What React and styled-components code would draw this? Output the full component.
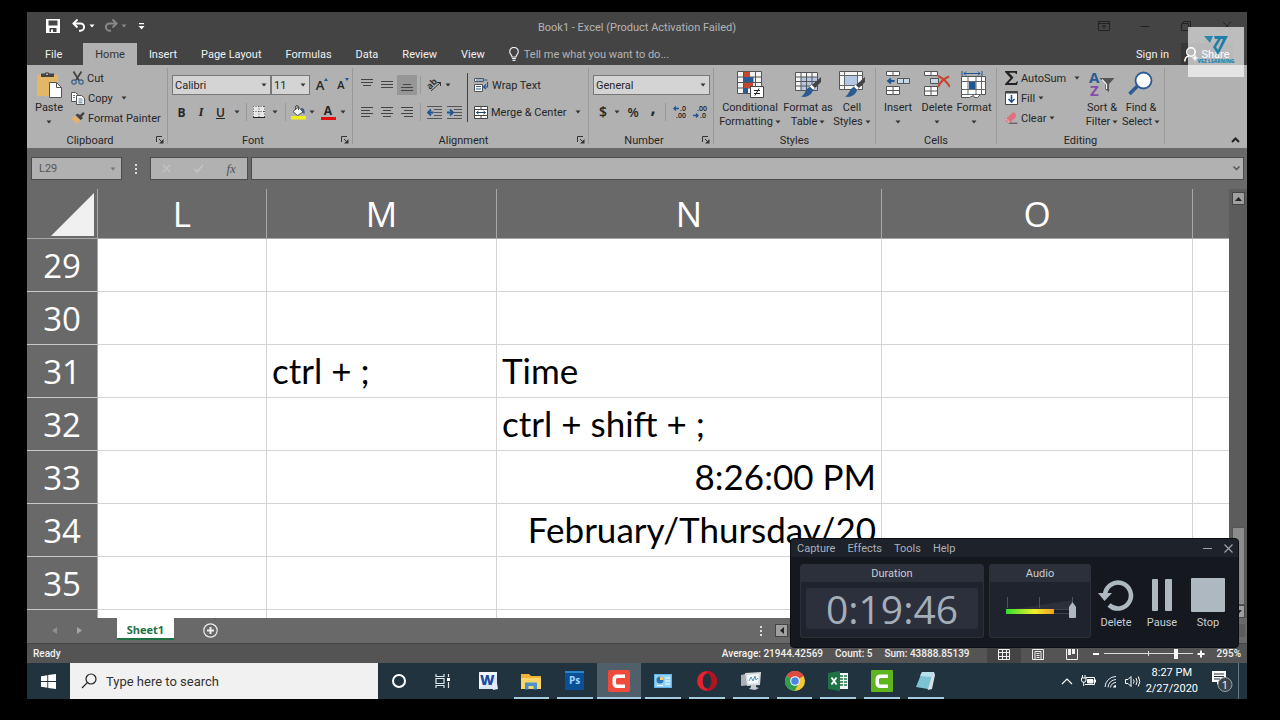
import React, { useState } from 'react';
import styled, { createGlobalStyle } from 'styled-components';

const columns = [
  { name: 'L', width: 169 },
  { name: 'M', width: 230 },
  { name: 'N', width: 385 },
  { name: 'O', width: 311 },
  { name: '' },
];

const rows = [29, 30, 31, 32, 33, 34, 35];

const cells = {
  M31: { text: 'ctrl + ;' },
  N31: { text: 'Time' },
  N32: { text: 'ctrl + shift + ;' },
  N33: { text: '8:26:00 PM', right: true },
  N34: { text: 'February/Thursday/20', right: true },
};

const tabs = ['Home', 'Insert', 'Page Layout', 'Formulas', 'Data', 'Review', 'View'];

function Caret({ color = '#333' }) {
  return (
    <svg width="6" height="4" viewBox="0 0 6 4">
      <path d="M0.5 0.5h5L3 3.5z" fill={color} />
    </svg>
  );
}

function Launcher() {
  return (
    <svg width="8" height="8" viewBox="0 0 8 8" fill="none" stroke="#333">
      <path d="M0.5 6V0.5H6M3 3l3 3" />
      <path d="M7.5 3v4.5H3z" fill="#333" stroke="none" />
    </svg>
  );
}

function Lines({ rows: list, color = '#444' }) {
  return (
    <svg width="14" height="14" viewBox="0 0 14 14" stroke={color}>
      {list.map(([x, y, w]) => (
        <path key={y} d={`M${x} ${y + 0.5}h${w}`} />
      ))}
    </svg>
  );
}

const SaveIcon = () => (
  <svg width="14" height="14" viewBox="0 0 14 14">
    <path
      d="M0 0h14v14H0zM2.5 1.5v5h9v-5zM3.5 9v4h1.5v-2.5h2V13h3.500V9z"
      fill="#fff"
      fillRule="evenodd"
    />
  </svg>
);

const UndoIcon = ({ color, flip }) => (
  <svg width="14" height="13" viewBox="0 0 14 13" fill="none" stroke={color}>
    <g transform={flip ? 'matrix(-1 0 0 1 14 0)' : undefined}>
      <path d="M1.500 4.500h7a3.600 3.600 0 0 1 0 7.200H7" strokeWidth="2" />
      <path d="M5.500 0.500L1.500 4.500l4 4" strokeWidth="2" />
    </g>
  </svg>
);

const CustomizeIcon = () => (
  <svg width="7" height="8" viewBox="0 0 7 8" fill="#fff">
    <path d="M1 1h5v1.200H1zM0.500 4h6l-3 3.500z" />
  </svg>
);

const PasteIcon = () => (
  <svg width="27" height="28" viewBox="0 0 27 28">
    <path d="M1 4h21v21H1z" fill="#e3b766" />
    <path d="M5 2.500h3.500a3 3 0 0 1 5 0H18V6H5z" fill="#444" />
    <path d="M10 2.500h2v1.500h-2z" fill="#b1b1b1" />
    <path d="M13.500 11.500h7l5 5v10h-12z" fill="#fff" stroke="#555" />
    <path d="M20.500 11.500v5h5" fill="none" stroke="#555" />
  </svg>
);

const CutIcon = () => (
  <svg width="13" height="14" viewBox="0 0 13 14" fill="none">
    <path d="M2.500 0.500l5.500 9M10.500 0.500L5 9" stroke="#444" strokeWidth="1.800" />
    <circle cx="3" cy="11" r="2.200" stroke="#35608f" strokeWidth="1.200" />
    <circle cx="10" cy="11" r="2.200" stroke="#35608f" strokeWidth="1.200" />
  </svg>
);

const CopyIcon = () => (
  <svg width="14" height="13" viewBox="0 0 14 13" fill="#fff" stroke="#555">
    <path d="M0.500 0.500h4l2.500 2v7h-6.500z" />
    <path d="M5.500 3.500h5l3 2.500v6.500h-8z" />
    <path d="M2 3.500h2M2 5.500h2M7.500 7h4M7.500 9h4M7.500 10.800h4" stroke="#35608f" strokeWidth="0.800" />
  </svg>
);

const PainterIcon = () => (
  <svg width="14" height="12" viewBox="0 0 14 12">
    <path d="M0 6l4.500-2 4.500 4.500L6 12z" fill="#e8b26a" />
    <path d="M4.500 3l2-1.500 2.500 1.500L12 0l1.800 1.600L11 4.500l.8 2L9.500 8z" fill="#444" />
  </svg>
);

const BordersIcon = () => (
  <svg width="12" height="12" viewBox="0 0 12 12">
    <path d="M0 0h12v12H0z" fill="#e6e6e6" />
    <path
      d="M0.500 0v11M11.500 0v11M6 0v11M0 0.500h12M0 5.500h12"
      stroke="#555"
      strokeDasharray="1 1.500"
      fill="none"
    />
    <path d="M0 11.500h12" stroke="#222" />
  </svg>
);

const FillColorIcon = () => (
  <svg width="15" height="15" viewBox="0 0 15 15">
    <path d="M10 3c3 0 4 2 3.500 6L10 7z" fill="#35608f" />
    <path d="M2 6.500L7.500 2l4.500 5-5.500 3.500z" fill="#f4f4f4" stroke="#444" strokeWidth="0.900" />
    <path d="M4.500 5V2a1.500 1.500 0 0 1 3 0v3" fill="none" stroke="#444" strokeWidth="0.900" />
    <path d="M0 11h15v3.500H0z" fill="#f2ee1c" />
  </svg>
);

const OrientationIcon = () => (
  <svg width="15" height="14" viewBox="0 0 15 14" overflow="visible">
    <text x="0" y="9" fontSize="9" fontWeight="700" fontFamily="Open Sans, sans-serif" fill="#333" transform="rotate(-45 5 7)">
      ab
    </text>
    <path d="M4 13L13.500 4.500M13.500 4.500v3.500M13.500 4.500H10" stroke="#333" fill="none" />
  </svg>
);

const IndentIcon = ({ right }) => (
  <svg width="15" height="13" viewBox="0 0 15 13" fill="none">
    <path d="M0 0.500h15M7 3.500h8M7 6.500h8M7 9.500h8M0 12.500h15" stroke="#555" />
    <path
      d={right ? 'M0 6.500h5M3 3.500l3 3-3 3' : 'M1 6.500h5.500M4 3.500l-3 3 3 3'}
      stroke="#1f5796"
      strokeWidth="1.800"
    />
  </svg>
);

const WrapIcon = () => (
  <svg width="15" height="14" viewBox="0 0 15 14">
    <path d="M0.500 0.500h9v3h-9zM0.500 6.500h8v7h-8z" fill="#fff" stroke="#555" />
    <path d="M2 2h11.500M2 8.500h5M2 11h5" stroke="#35608f" />
    <path d="M13.500 4v5H10M12 6.500L9.500 9l2.500 2" stroke="#1f5796" strokeWidth="1.200" fill="none" />
  </svg>
);

const MergeIcon = () => (
  <svg width="14" height="13" viewBox="0 0 14 13">
    <path d="M0.500 0.500h13v12h-13z" fill="#fff" stroke="#444" />
    <path d="M0.500 3.500h13M0.500 9.500h13M7 0.500v3M7 9.500v3" stroke="#444" />
    <path d="M2.500 6.500h9M4.500 5l-2 1.500 2 1.500M9.500 5l2 1.500-2 1.500" stroke="#1f3f6e" fill="none" />
  </svg>
);

const DecimalIcon = ({ more }) => (
  <svg width="14" height="14" viewBox="0 0 14 14" overflow="visible">
    <g fontFamily="Open Sans, sans-serif" fontSize="7" fontWeight="600" fill="#222">
      <text x={more ? 7 : 4} y="6">{more ? '.0' : '.00'}</text>
      <text x={more ? 3 : 7} y="13">{more ? '.00' : '.0'}</text>
    </g>
    <path
      d={more ? 'M6 3.500H1M3 1.500l-2 2 2 2' : 'M0 10.500h5M3 8.500l2 2-2 2'}
      stroke="#1f5796"
      strokeWidth="1.400"
      fill="none"
    />
  </svg>
);

const ConditionalIcon = () => (
  <svg width="28" height="28" viewBox="0 0 28 28">
    <path d="M1.500 0.500h24v22h-24z" fill="#f4f4f4" stroke="#555" />
    <path d="M7.500 0.500v22M19.500 0.500v22M1.500 6h24M1.500 11.500h24M1.500 17h24" stroke="#555" />
    <path d="M8 1h6v5H8zM8 12h9v5H8z" fill="#c8452d" />
    <path d="M8 6h9.500v5H8zM8 17h4v5H8z" fill="#2a5b94" />
    <path d="M14.500 15.500h13v11h-13z" fill="#fff" stroke="#444" />
    <path d="M18 19.500h6M18 22.500h6M23 17.500l-4 7" stroke="#222" />
  </svg>
);

const Brush = () => (
  <>
    <path d="M26 6v5l-6 6-3-3z" fill="#444" />
    <path d="M16.500 13.500l3.500 3.500-2 2-3.500-3.500z" fill="#fff" stroke="#666" strokeWidth="0.600" />
    <path d="M15 16l3 3c-1 5-7 8-12 6.500 4-1 4-8 9-9.500z" fill="#2a5b94" />
  </>
);

const FormatTableIcon = () => (
  <svg width="27" height="28" viewBox="0 0 27 28">
    <path d="M0.500 1.500h22v18h-22z" fill="#f4f4f4" />
    <path d="M6 6h16.500v13.500H6z" fill="#b4c8e6" />
    <path d="M0.500 1.500h22v18h-22zM6 1.500v18M11.500 1.500v18M17 1.500v18M0.500 6h22M0.500 10.500h22M0.500 15h22" fill="none" stroke="#555" />
    <Brush />
  </svg>
);

const CellStylesIcon = () => (
  <svg width="27" height="28" viewBox="0 0 27 28">
    <path d="M0.500 0.500h23v18h-23z" fill="#f4f4f4" stroke="#555" />
    <path d="M5.500 0.500v18M18.500 0.500v18M0.500 4.500h23M0.500 14.500h23" stroke="#666" />
    <path d="M6 5h12v9H6z" fill="#b4c8e6" />
    <Brush />
  </svg>
);

const InsertIcon = () => (
  <svg width="26" height="28" viewBox="0 0 26 28">
    <g fill="#fff" stroke="#555">
      <path d="M1.500 0.500h13v4h-13zM8 0.500v4M1.500 15.500h13v8h-13zM8 15.500v8M1.500 19.500h13" />
      <path d="M12.500 7.500h12v5h-12zM18.500 7.500v5" fill="#c8d6ea" />
    </g>
    <path d="M9.500 10H3.500M6 7.500L3 10l3 2.500" stroke="#1f5796" strokeWidth="1.800" fill="none" />
  </svg>
);

const DeleteIcon = () => (
  <svg width="26" height="28" viewBox="0 0 26 28">
    <g fill="#fff" stroke="#555">
      <path d="M0.500 0.500h13v4h-13zM7 0.500v4M0.500 15.500h13v9h-13zM7 15.500v9M0.500 20h13" />
      <path d="M6.500 7.500h8v5h-8z" fill="#c8d6ea" />
    </g>
    <path d="M14 5c5 2 9 6 12 11M25 5.500c-5 2-9 6-11 10.500" stroke="#c8452d" strokeWidth="2" fill="none" />
  </svg>
);

const FormatIcon = () => (
  <svg width="26" height="28" viewBox="0 0 26 28">
    <path d="M1 0v5M21 0v5M3 2.500h16M5 0.500l-2 2 2 2M17 0.500l2 2-2 2" stroke="#1f5796" fill="none" />
    <path d="M0.500 5.500h24v18h-5l-3 3h-3l-1-2-4 2h-8z" fill="#fff" stroke="#555" />
    <path d="M7 5.500v18M15 5.500v18M20.500 5.500v18M0.500 10.500h24M0.500 18.500h24M0.500 23.500h19" stroke="#666" />
    <path d="M8 11h6.500v7H8z" fill="#1f5796" />
  </svg>
);

const SumIcon = () => (
  <svg width="13" height="14" viewBox="0 0 13 14">
    <path d="M0 0h12v3h-1L10 1.800H4L8.500 6.500 3.500 12H10.500L12 10.500h1L12 14H0v-1l5.500-6L0 1z" fill="#222" />
  </svg>
);

const FillIcon = () => (
  <svg width="13" height="14" viewBox="0 0 13 14">
    <path d="M0.500 0.500h12v13h-12z" fill="#fff" stroke="#444" />
    <path d="M0.500 0.500h12v2h-12z" fill="#444" />
    <path d="M6.500 4v7M3.500 8l3 3 3-3" stroke="#1f5796" strokeWidth="1.600" fill="none" />
  </svg>
);

const ClearIcon = () => (
  <svg width="13" height="12" viewBox="0 0 13 12">
    <path d="M1 7l6.500-6.500h2L11 3v2L5 10.500H3L0.500 8.500z" fill="#e0707c" />
    <path d="M1 7l4 3.500" stroke="#f6c4c8" />
    <path d="M4 11.200h8.500" stroke="#444" />
  </svg>
);

const SortIcon = () => (
  <svg width="28" height="28" viewBox="0 0 28 28" overflow="visible">
    <g fontFamily="Open Sans, sans-serif" fontSize="15" fontWeight="700">
      <text x="1" y="12" fill="#2a5b94">A</text>
      <text x="2" y="25" fill="#8a4ba8">Z</text>
    </g>
    <path d="M11.500 7h15l-5.500 6v8l-4-3v-5z" fill="#555" />
    <path d="M14 8.500l4.500 5v4.500" stroke="#f4f4f4" strokeWidth="1.300" fill="none" />
  </svg>
);

const FindIcon = () => (
  <svg width="26" height="28" viewBox="0 0 26 28">
    <path d="M9.500 15L1.500 23" stroke="#2a5b94" strokeWidth="3.500" />
    <circle cx="15.500" cy="9.500" r="8" fill="#fff" stroke="#2a5b94" strokeWidth="1.800" />
  </svg>
);

const BulbIcon = () => (
  <svg width="10" height="14" viewBox="0 0 10 14" fill="none" stroke="#eee">
    <path d="M3 10c0-2-2.300-2.800-2.300-5.300a4.300 4.300 0 0 1 8.600 0C9.300 7.200 7 8 7 10z" strokeWidth="1.200" />
    <path d="M3 11.500h4M3.500 13.300h3" strokeWidth="1.200" />
  </svg>
);

const ShareIcon = () => (
  <svg width="14" height="15" viewBox="0 0 14 15" fill="none" stroke="#fff" strokeWidth="1.600">
    <circle cx="7" cy="5" r="4.200" />
    <path d="M0.800 14.500c0-3 2-5 4-5.500M8.500 11h5M11 8.500v5" />
  </svg>
);

const WindowsIcon = () => (
  <svg width="15" height="15" viewBox="0 0 15 15" fill="#fff">
    <path d="M0 2.200L6.300 1.200V7H0zM7.200 1L15 0v7H7.200zM0 8h6.300v5.800L0 12.800zM7.200 8H15v7l-7.800-1z" />
  </svg>
);

const apps = [
  {
    name: 'Cortana',
    icon: <circle cx="9" cy="10" r="6" fill="none" stroke="#fff" strokeWidth="2" />,
  },
  {
    name: 'Task View',
    icon: (
      <g fill="none" stroke="#dfe6ea" strokeWidth="1.200">
        <path d="M2 3v2.500h8V3M2 17v-2.500h8V17M2 7.500h8v5H2zM14.500 3v3M14.500 11v6" />
        <path d="M13 7h3v3h-3z" fill="#fff" stroke="none" />
      </g>
    ),
  },
  {
    name: 'Word',
    icon: (
      <>
        <path d="M1 1h18v17H1z" fill="#dbe6f6" />
        <path d="M3 1h16v4L1 17V3z" fill="#f3f7fd" />
        <text x="2" y="14" fontSize="14" fontWeight="800" fontFamily="Open Sans, sans-serif" fill="#1d4d9f">
          W
        </text>
        <path d="M14 12h5l1 6-5 1z" fill="#e6e9fa" />
      </>
    ),
  },
  {
    name: 'File Explorer',
    open: true,
    icon: (
      <>
        <path d="M0 3h8l2 2h10v13H0z" fill="#f0b43a" />
        <path d="M0 7h20v11H0z" fill="#fbd567" />
        <path d="M4 18.500v-7h12v7h-3.500v-3.500h-5v3.500z" fill="#4a92c8" />
      </>
    ),
  },
  {
    name: 'Photoshop',
    open: true,
    icon: (
      <>
        <path d="M0 0h19v19H0z" fill="#0b4f97" />
        <path d="M0 0h19v2H0z" fill="#2a86cc" />
        <text x="4" y="13" fontSize="10" fontWeight="700" fontFamily="Open Sans, sans-serif" fill="#9fd6ff">
          Ps
        </text>
      </>
    ),
  },
  {
    name: 'Recorder',
    open: true,
    active: true,
    icon: (
      <>
        <rect x="-1" y="-1" width="22" height="22" rx="2" fill="#ef4a3c" />
        <path d="M16 3.500H8A4.500 4.500 0 0 0 3.500 8v4.500A4.500 4.500 0 0 0 8 17h8v-3.500H8.500A1.500 1.500 0 0 1 7 12V8.500A1.500 1.500 0 0 1 8.500 7H16z" fill="#fff" />
      </>
    ),
  },
  {
    name: 'Control Panel',
    open: true,
    icon: (
      <>
        <path d="M1 3h18v14H1z" fill="#5fb6ea" />
        <path d="M2 4h16v12H2z" fill="#8fd2f5" />
        <circle cx="7" cy="9" r="3.500" fill="#2b73b4" />
        <path d="M7 9V5.500A3.500 3.500 0 0 1 10.500 9z" fill="#f4d35e" />
        <path d="M12 7h5M12 10h5M12 13h5M4 14.500h6" stroke="#fff" />
      </>
    ),
  },
  {
    name: 'Opera',
    open: true,
    icon: (
      <>
        <circle cx="10" cy="10" r="10" fill="#e5222f" />
        <path d="M10 0a10 10 0 0 1 0 20z" fill="#b3131f" />
        <ellipse cx="10" cy="10" rx="4.300" ry="7.500" fill="#21313d" />
      </>
    ),
  },
  {
    name: 'System Monitor',
    open: true,
    icon: (
      <>
        <path d="M0 4l9-2v12l-9 1z" fill="#aab0b5" />
        <path d="M4 2l16-1-1 13-13 1z" fill="#d3d9dc" />
        <path d="M6 4l12-1-1 9-10 1z" fill="#f3f8fb" />
        <path d="M8 10l2-4 2 4 2-5 1 4 2-2" fill="none" stroke="#4f93b7" />
        <path d="M10 14h5v2l3 1-4 2-6-1 2-2z" fill="#c5cbd0" />
      </>
    ),
  },
  {
    name: 'Chrome',
    open: true,
    icon: (
      <>
        <circle cx="10" cy="10" r="10" fill="#f7c934" />
        <path d="M10 10L1.300 5a10 10 0 0 1 17.400 0z" fill="#dd4b3e" />
        <path d="M10 10L1.300 5A10 10 0 0 0 9.500 20l4.500-8z" fill="#2f9e55" />
        <circle cx="10" cy="10" r="4.800" fill="#fff" />
        <circle cx="10" cy="10" r="3.800" fill="#4a84e8" />
      </>
    ),
  },
  {
    name: 'Excel',
    open: true,
    icon: (
      <>
        <path d="M10 2h10v16H10z" fill="#f2f7f3" />
        <path d="M12 5h3M16 5h3M12 8h3M16 8h3M12 11h3M16 11h3M12 14h3M16 14h3" stroke="#1f7244" strokeWidth="1.500" />
        <path d="M0 2l12-2v20L0 18z" fill="#1f7244" />
        <path d="M3.500 6.500l5 7M8.500 6.500l-5 7" stroke="#fff" strokeWidth="1.800" />
      </>
    ),
  },
  {
    name: 'Camtasia',
    open: true,
    icon: (
      <>
        <rect x="-1" y="-1" width="22" height="22" rx="1" fill="#5fb51e" />
        <path d="M16 3.500H8A4.500 4.500 0 0 0 3.500 8v4.500A4.500 4.500 0 0 0 8 17h8v-3.500H8.500A1.500 1.500 0 0 1 7 12V8.500A1.500 1.500 0 0 1 8.500 7H16z" fill="#fff" />
      </>
    ),
  },
  {
    name: 'Notepad',
    open: true,
    icon: (
      <>
        <path d="M6 1h12l1 3-3 14-4 1z" fill="#d7e0e4" />
        <path d="M6 1h11l-5 17-12-2z" fill="#7cc3d6" />
        <path d="M6 1h11l-1.500 5L4 5z" fill="#b7e2ec" />
      </>
    ),
  },
];

function Group({ label, width, launcher, children }) {
  return (
    <GroupBox $width={width}>
      <GroupBody>{children}</GroupBody>
      <GroupFooter>
        <span>{label}</span>
        {launcher && (
          <LauncherButton aria-label={`${label} settings`}>
            <Launcher />
          </LauncherButton>
        )}
      </GroupFooter>
    </GroupBox>
  );
}

function Big({ icon, lines, width }) {
  return (
    <BigButton $width={width}>
      {icon}
      <span>{lines[0]}</span>
      <BigSecond>
        {lines[1]}
        <Caret />
      </BigSecond>
    </BigButton>
  );
}

function Combo({ label, value, width }) {
  return (
    <ComboBox $width={width}>
      <select aria-label={label} defaultValue={value}>
        <option>{value}</option>
      </select>
      <Caret />
    </ComboBox>
  );
}

function Ribbon() {
  return (
    <RibbonBar>
      <Group label="Clipboard" width={141} launcher>
        <Big icon={<PasteIcon />} lines={['Paste', '']} width={44} />
        <Stack>
          <SmallButton><CutIcon />Cut</SmallButton>
          <SmallButton><CopyIcon />Copy<Gap $w={2} /><Caret /></SmallButton>
          <SmallButton><PainterIcon />Format Painter</SmallButton>
        </Stack>
      </Group>

      <Group label="Font" width={185} launcher>
        <TwoRows $pad={4}>
          <ToolRow>
            <Combo label="Font" value="Calibri" width={99} />
            <Combo label="Font size" value="11" width={39} />
            <Tool $w={24} aria-label="Increase font size">
              <Letter $size={13}>A</Letter>
              <Corner><svg width="4" height="3" viewBox="0 0 4 3"><path d="M0 3l2-3 2 3z" fill="#1f5796" /></svg></Corner>
            </Tool>
            <Tool $w={18} aria-label="Decrease font size">
              <Letter $size={11}>A</Letter>
              <Corner><svg width="4" height="3" viewBox="0 0 4 3"><path d="M0 0l2 3 2-3z" fill="#1f5796" /></svg></Corner>
            </Tool>
          </ToolRow>
          <ToolRow>
            <Tool $w={19} aria-label="Bold"><b>B</b></Tool>
            <Tool $w={20} aria-label="Italic"><Serif>I</Serif></Tool>
            <Tool $w={19} aria-label="Underline"><Underlined>U</Underlined></Tool>
            <Tool $w={13} aria-label="Underline styles"><Caret /></Tool>
            <Rule $m={3} />
            <Tool $w={18} aria-label="Borders"><BordersIcon /></Tool>
            <Tool $w={14} aria-label="Border styles"><Caret /></Tool>
            <Rule $m={3} />
            <Tool $w={18} aria-label="Fill color"><FillColorIcon /></Tool>
            <Tool $w={9} aria-label="Fill colors"><Caret /></Tool>
            <Tool $w={24} aria-label="Font color"><ColorLetter>A</ColorLetter></Tool>
            <Tool $w={6} aria-label="Font colors"><Caret /></Tool>
          </ToolRow>
        </TwoRows>
      </Group>

      <Group label="Alignment" width={236} launcher>
        <TwoRows $pad={4}>
          <ToolRow>
            <Tool $w={20} aria-label="Top align"><Lines rows={[[1, 1, 12], [1, 4, 12], [3, 7, 8]]} /></Tool>
            <Tool $w={20} aria-label="Middle align"><Lines rows={[[1, 3, 12], [1, 6, 12], [1, 9, 12]]} /></Tool>
            <Tool $w={20} $on aria-label="Bottom align"><Lines rows={[[3, 6, 8], [1, 9, 12], [1, 12, 12]]} /></Tool>
            <Rule $m={3} />
            <Tool $w={20} aria-label="Orientation"><OrientationIcon /></Tool>
            <Tool $w={8} aria-label="Orientations"><Caret /></Tool>
          </ToolRow>
          <ToolRow>
            <Tool $w={20} aria-label="Align left"><Lines rows={[[1, 2, 12], [1, 5, 9], [1, 8, 12], [1, 11, 9]]} /></Tool>
            <Tool $w={20} aria-label="Center"><Lines rows={[[1, 2, 12], [3, 5, 8], [1, 8, 12], [3, 11, 8]]} /></Tool>
            <Tool $w={20} aria-label="Align right"><Lines rows={[[1, 2, 12], [4, 5, 9], [1, 8, 12], [4, 11, 9]]} /></Tool>
            <Rule $m={3} />
            <Tool $w={20} aria-label="Decrease indent"><IndentIcon /></Tool>
            <Tool $w={20} aria-label="Increase indent"><IndentIcon right /></Tool>
          </ToolRow>
        </TwoRows>
        <DarkRule />
        <TwoRows $pad={6}>
          <SmallButton><WrapIcon />Wrap Text</SmallButton>
          <SmallButton><MergeIcon />Merge &amp; Center<Gap $w={2} /><Caret /></SmallButton>
        </TwoRows>
      </Group>

      <Group label="Number" width={125} launcher>
        <TwoRows $pad={4}>
          <Combo label="Number format" value="General" width={117} />
          <ToolRow>
            <Tool $w={20} aria-label="Accounting format"><Letter $size={14}>$</Letter></Tool>
            <Tool $w={8} aria-label="Currencies"><Caret /></Tool>
            <Tool $w={24} aria-label="Percent style"><Letter $size={13}>%</Letter></Tool>
            <Tool $w={16} aria-label="Comma style"><Comma>,</Comma></Tool>
            <Rule $m={4} />
            <Tool $w={20} aria-label="Increase decimal"><DecimalIcon more /></Tool>
            <Tool $w={20} aria-label="Decrease decimal"><DecimalIcon /></Tool>
          </ToolRow>
        </TwoRows>
      </Group>

      <Group label="Styles" width={162}>
        <Gap $w={1} />
        <Big icon={<ConditionalIcon />} lines={['Conditional', 'Formatting']} width={70} />
        <Big icon={<FormatTableIcon />} lines={['Format as', 'Table']} width={46} />
        <Big icon={<CellStylesIcon />} lines={['Cell', 'Styles']} width={42} />
      </Group>

      <Group label="Cells" width={121}>
        <Gap $w={1} />
        <Big icon={<InsertIcon />} lines={['Insert', '']} width={42} />
        <Big icon={<DeleteIcon />} lines={['Delete', '']} width={36} />
        <Big icon={<FormatIcon />} lines={['Format', '']} width={38} />
      </Group>

      <Group label="Editing" width={168}>
        <Gap $w={8} />
        <Stack>
          <SmallButton><SumIcon />AutoSum<Gap $w={2} /><Caret /></SmallButton>
          <SmallButton><FillIcon />Fill<Caret /></SmallButton>
          <SmallButton><ClearIcon />Clear<Caret /></SmallButton>
        </Stack>
        <Spacer />
        <Big icon={<SortIcon />} lines={['Sort &', 'Filter']} width={38} />
        <Big icon={<FindIcon />} lines={['Find &', 'Select']} width={40} />
        <Gap $w={3} />
      </Group>

      <CollapseButton aria-label="Collapse the ribbon">
        <svg width="9" height="6" viewBox="0 0 9 6" fill="none" stroke="#222" strokeWidth="2">
          <path d="M1 5l3.500-3.500L8 5" />
        </svg>
      </CollapseButton>
    </RibbonBar>
  );
}

function Sheet() {
  return (
    <SheetArea>
      <SheetView>
        <Grid>
          <colgroup>
            <Col $width={71} />
            {columns.map((col) => (
              <Col key={col.name} $width={col.width} />
            ))}
          </colgroup>
          <thead>
            <tr>
              <CornerCell>
                <svg width="43" height="43" viewBox="0 0 43 43">
                  <path d="M43 0v43H0z" fill="#f0f0f0" />
                </svg>
              </CornerCell>
              {columns.map((col) => (
                <ColHead key={col.name}>{col.name}</ColHead>
              ))}
            </tr>
          </thead>
          <tbody>
            {rows.map((row) => (
              <tr key={row}>
                <RowHead>{row}</RowHead>
                {columns.map((col) => {
                  const cell = cells[col.name + row];
                  return (
                    <Cell key={col.name} $right={cell && cell.right}>
                      {cell && cell.text}
                    </Cell>
                  );
                })}
              </tr>
            ))}
            <tr>
              <RowHead />
              {columns.map((col) => (
                <Cell key={col.name} />
              ))}
            </tr>
          </tbody>
        </Grid>
      </SheetView>
      <ScrollBar>
        <ScrollButton aria-label="Scroll up">
          <svg width="7" height="4" viewBox="0 0 7 4"><path d="M0 4l3.500-4L7 4z" fill="#222" /></svg>
        </ScrollButton>
        <Spacer />
        <ScrollThumb />
        <ScrollButton aria-label="Scroll down">
          <svg width="7" height="4" viewBox="0 0 7 4"><path d="M0 0l3.500 4L7 0z" fill="#222" /></svg>
        </ScrollButton>
      </ScrollBar>
    </SheetArea>
  );
}

function Recorder() {
  return (
    <RecorderWindow>
      <RecorderMenu>
        {['Capture', 'Effects', 'Tools', 'Help'].map((item) => (
          <button key={item}>{item}</button>
        ))}
        <Spacer />
        <button aria-label="Minimize recorder">
          <svg width="9" height="9" viewBox="0 0 9 9"><path d="M0 4.500h9" stroke="#9aa3ad" /></svg>
        </button>
        <button aria-label="Close recorder">
          <svg width="9" height="9" viewBox="0 0 9 9"><path d="M0.500 0.500l8 8M8.500 0.500l-8 8" stroke="#9aa3ad" strokeWidth="1.200" /></svg>
        </button>
      </RecorderMenu>
      <RecorderBody>
        <Panel $width={184}>
          <PanelTitle>Duration</PanelTitle>
          <Digits>0:19:46</Digits>
        </Panel>
        <Panel $width={102}>
          <PanelTitle>Audio</PanelTitle>
          <Meter>
            <svg width="72" height="26" viewBox="0 0 72 26">
              <defs>
                <linearGradient id="level" x1="0" x2="1">
                  <stop offset="0" stopColor="#2fe02f" />
                  <stop offset="0.6" stopColor="#f4ee2c" />
                  <stop offset="1" stopColor="#f0a020" />
                </linearGradient>
              </defs>
              <path d="M3 13L69 3v10z" fill="#2c303b" />
              <path d="M3.500 0v11M35.500 0v11M68.500 0v8" stroke="#4c525e" />
              <path d="M2.500 12.500h66v4h-66z" fill="#1c1f29" stroke="#3d434f" />
              <path d="M2 12h48v5H2z" fill="url(#level)" />
              <path d="M68.500 5l3.500 5v10a1 1 0 0 1-1 1h-5a1 1 0 0 1-1-1V10z" fill="#adb8c1" />
            </svg>
          </Meter>
        </Panel>
        <RecorderButton>
          <svg width="34" height="34" viewBox="0 0 34 34" overflow="visible">
            <path d="M6 16.500A13 13 0 1 1 10 27" fill="none" stroke="#adb8c1" strokeWidth="4.500" />
            <path d="M-1 15h14l-7.500 8z" fill="#adb8c1" />
          </svg>
          Delete
        </RecorderButton>
        <RecorderButton>
          <svg width="34" height="34" viewBox="0 0 34 34" fill="#adb8c1">
            <rect x="7" y="1" width="6" height="32" rx="1" />
            <rect x="20" y="1" width="7" height="32" rx="1" />
          </svg>
          Pause
        </RecorderButton>
        <RecorderButton>
          <svg width="34" height="34" viewBox="0 0 34 34" fill="#adb8c1">
            <rect width="34" height="34" rx="1" />
          </svg>
          Stop
        </RecorderButton>
      </RecorderBody>
    </RecorderWindow>
  );
}

function Taskbar() {
  return (
    <TaskbarBar>
      <StartButton aria-label="Start"><WindowsIcon /></StartButton>
      <SearchBox>
        <svg width="16" height="16" viewBox="0 0 16 16" fill="none" stroke="#222" strokeWidth="1.200">
          <circle cx="10" cy="6" r="5" />
          <path d="M6.300 9.700L1 15" />
        </svg>
        <input aria-label="Search" placeholder="Type here to search" />
      </SearchBox>
      <AppList>
        {apps.map((app) => (
          <AppButton key={app.name} aria-label={app.name} $open={app.open} $active={app.active}>
            <svg width="20" height="20" viewBox="0 0 20 20" overflow="visible">{app.icon}</svg>
          </AppButton>
        ))}
      </AppList>
      <Spacer />
      <Tray>
        <button aria-label="Show hidden icons">
          <svg width="12" height="7" viewBox="0 0 12 7" fill="none" stroke="#fff" strokeWidth="1.200"><path d="M1 6l5-5 5 5" /></svg>
        </button>
        <button aria-label="Battery">
          <svg width="15" height="12" viewBox="0 0 15 12" fill="none" stroke="#fff">
            <path d="M5 2.500h8.500v7H4M14.500 4.500v3" />
            <path d="M6.500 4.500h5.500v3.500H6.500z" fill="#fff" />
            <path d="M1.500 0v3M4 0v3M0.500 3h4.500v2a2 2 0 0 1-4.500 0zM2.700 7v4" />
          </svg>
        </button>
        <button aria-label="Network">
          <svg width="13" height="13" viewBox="0 0 13 13" fill="none" stroke="#e8edf0">
            <path d="M1 12A11 11 0 0 1 12 1.500M4 12.300A8.300 8.300 0 0 1 12 4.500M6.500 12.500A5.500 5.500 0 0 1 12 7.500" />
            <path d="M9 12.500A3 3 0 0 1 12 10v2.500z" fill="#fff" stroke="none" />
          </svg>
        </button>
        <button aria-label="Volume">
          <svg width="16" height="13" viewBox="0 0 16 13" fill="none" stroke="#fff">
            <path d="M0.500 4.500h2.500l3-3v10l-3-3H0.500zM8.500 4.500q1.200 2 0 4M11 3q2.200 3.500 0 7M13.300 1.500q3 5 0 10" />
          </svg>
        </button>
      </Tray>
      <Clock>
        <span>8:27 PM</span>
        <span>2/27/2020</span>
      </Clock>
      <ActionCenter aria-label="Notifications">
        <svg width="22" height="24" viewBox="0 0 22 24">
          <path d="M1 2h14v11H9l-3 3v-3H1z" fill="#fff" />
          <path d="M3 5h10M3 7.500h10M3 10h6" stroke="#21313d" />
          <circle cx="14" cy="15.500" r="7" fill="#3d4449" stroke="#98a2a8" />
          <text x="14" y="20" textAnchor="middle" fontSize="11" fontFamily="Open Sans, sans-serif" fill="#fff">1</text>
        </svg>
      </ActionCenter>
      <ShowDesktop aria-label="Show desktop" />
    </TaskbarBar>
  );
}

function App() {
  const [zoom, setZoom] = useState(295);

  return (
    <Page>
      <GlobalStyle />
      <Desktop>
        <TitleBar>
          <QuickAccess>
            <button aria-label="Save"><SaveIcon /></button>
            <Gap $w={12} />
            <button aria-label="Undo"><UndoIcon color="#fff" /></button>
            <Gap $w={3} />
            <Caret color="#fff" />
            <Gap $w={9} />
            <button aria-label="Redo"><UndoIcon color="#888" flip /></button>
            <Gap $w={3} />
            <Caret color="#888" />
            <Gap $w={11} />
            <button aria-label="Customize"><CustomizeIcon /></button>
          </QuickAccess>
          <Title>Book1 - Excel (Product Activation Failed)</Title>
          <WindowButtons>
            <button aria-label="Ribbon options">
              <svg width="12" height="10" viewBox="0 0 12 10" fill="none" stroke="#222"><path d="M0.500 0.500h11v9H0.500zM0.500 2.500h11M6 8V4M4 6l2-2 2 2" /></svg>
            </button>
            <button aria-label="Minimize">
              <svg width="10" height="10" viewBox="0 0 10 10" stroke="#222"><path d="M0.500 5.500h9" /></svg>
            </button>
            <button aria-label="Restore">
              <svg width="10" height="10" viewBox="0 0 10 10" fill="none" stroke="#222"><path d="M0.500 2.500h7v7h-7zM2.500 2.500v-2h7v7h-2" /></svg>
            </button>
            <button aria-label="Close">
              <svg width="10" height="10" viewBox="0 0 10 10" stroke="#222"><path d="M1 1l8 8M9 1l-8 8" /></svg>
            </button>
          </WindowButtons>
        </TitleBar>

        <TabBar>
          <TabButton>File</TabButton>
          <Gap $w={9} />
          {tabs.map((tab) => (
            <TabButton key={tab} $active={tab === 'Home'}>{tab}</TabButton>
          ))}
          <TellMe>
            <BulbIcon />
            Tell me what you want to do...
          </TellMe>
          <Spacer />
          <TabButton>Sign in</TabButton>
          <ShareButton><ShareIcon />Share</ShareButton>
        </TabBar>

        <Ribbon />

        <FormulaBar>
          <NameBox>
            <input aria-label="Name box" defaultValue="L29" />
            <Caret color="#777" />
          </NameBox>
          <Dots />
          <FormulaTools>
            <button aria-label="Cancel">
              <svg width="9" height="9" viewBox="0 0 9 9" stroke="#c2c2c2" strokeWidth="1.500"><path d="M1 1l7 7M8 1L1 8" /></svg>
            </button>
            <button aria-label="Enter">
              <svg width="11" height="9" viewBox="0 0 11 9" fill="none" stroke="#c2c2c2" strokeWidth="1.800"><path d="M1 5l3 3 6-7" /></svg>
            </button>
            <button aria-label="Insert function"><Serif $size={13} $light>fx</Serif></button>
          </FormulaTools>
          <FormulaInput>
            <input aria-label="Formula" />
            <svg width="7" height="5" viewBox="0 0 7 5" fill="none" stroke="#555" strokeWidth="1.500"><path d="M0.500 0.500l3 3 3-3" /></svg>
          </FormulaInput>
        </FormulaBar>

        <Sheet />

        <SheetTabs>
          <NavButton aria-label="Previous sheet">
            <svg width="5" height="7" viewBox="0 0 5 7"><path d="M5 0v7L0 3.500z" fill="#8f8f8f" /></svg>
          </NavButton>
          <NavButton aria-label="Next sheet">
            <svg width="5" height="7" viewBox="0 0 5 7"><path d="M0 0v7l5-3.500z" fill="#a5a5a5" /></svg>
          </NavButton>
          <SheetTab>Sheet1</SheetTab>
          <AddSheet aria-label="New sheet">
            <svg width="15" height="15" viewBox="0 0 15 15" fill="none" stroke="#eee">
              <circle cx="7.500" cy="7.500" r="6.700" strokeWidth="1.200" />
              <path d="M7.500 4v7M4 7.500h7" strokeWidth="2" />
            </svg>
          </AddSheet>
          <Spacer />
          <Dots />
          <ScrollButton aria-label="Scroll left">
            <svg width="4" height="7" viewBox="0 0 4 7"><path d="M4 0v7L0 3.500z" fill="#222" /></svg>
          </ScrollButton>
          <HorizontalTrack />
        </SheetTabs>

        <StatusBar>
          <span>Ready</span>
          <Spacer />
          <span>Average: 21944.42569</span>
          <span>Count: 5</span>
          <span>Sum: 43888.85139</span>
          <Views>
            <ViewButton $active aria-label="Normal view">
              <svg width="12" height="11" viewBox="0 0 12 11" fill="none" stroke="#eee"><path d="M0.500 0.500h11v10H0.500zM4.500 0v11M8.500 0v11M0 3.500h12M0 7.500h12" /></svg>
            </ViewButton>
            <ViewButton aria-label="Page layout view">
              <svg width="12" height="11" viewBox="0 0 12 11" fill="none" stroke="#eee"><path d="M0.500 0.500h11v10H0.500zM3 2.500h6v8M3 2.500v8M4.500 4.500h3M4.500 6.500h3M4.500 8.500h3" /></svg>
            </ViewButton>
            <ViewButton aria-label="Page break view">
              <svg width="12" height="11" viewBox="0 0 12 11" fill="none" stroke="#eee"><path d="M0.500 0v10.500h11V0" /><path d="M2 0h3v6H2zM6 0h3v5H6z" fill="#eee" stroke="none" /></svg>
            </ViewButton>
          </Views>
          <ZoomControl>
            <button aria-label="Zoom out"><svg width="7" height="8" viewBox="0 0 7 8"><path d="M0 4h6" stroke="#fff" strokeWidth="2" /></svg></button>
            <input
              type="range"
              aria-label="Zoom"
              min="10"
              max="355"
              value={zoom}
              onChange={(e) => setZoom(Number(e.target.value))}
            />
            <button aria-label="Zoom in"><svg width="8" height="8" viewBox="0 0 8 8"><path d="M0.500 4h7M4 0.500v7" stroke="#fff" strokeWidth="2" /></svg></button>
          </ZoomControl>
          <span>{zoom}%</span>
        </StatusBar>

        <Taskbar />
      </Desktop>

      <Recorder />

      <Watermark>
        <svg width="24" height="20" viewBox="0 0 24 20">
          <path d="M0 0h9L6 7z" fill="#2a86ae" />
          <path d="M10 0h14L14 19l-5-8 5-8h3l-5 8 2 3L19 3h-8z" fill="#1f7fa9" />
        </svg>
        <span>VEZ LEARNING</span>
      </Watermark>
    </Page>
  );
}

export default App;

const GlobalStyle = createGlobalStyle`
  * {
    box-sizing: border-box;
  }

  body {
    margin: 0;
    background: #000;
    font-family: Roboto, 'Open Sans', sans-serif;
    font-size: 11px;
  }

  button {
    display: flex;
    align-items: center;
    justify-content: center;
    margin: 0;
    padding: 0;
    border: 0;
    background: none;
    color: inherit;
    font: inherit;
    white-space: nowrap;
  }

  input, select {
    margin: 0;
    min-width: 0;
    border: 0;
    outline: 0;
    background: none;
    color: inherit;
    font: inherit;
  }

  svg {
    display: block;
    flex: none;
  }
`;

const Page = styled.div`
  position: relative;
  display: flex;
  height: 100vh;
  padding: 12px 33px 21px 27px;
`;

const Desktop = styled.main`
  display: flex;
  flex: 1;
  flex-direction: column;
  min-width: 0;
  background: #696969;
`;

const Spacer = styled.div`
  flex: 1;
`;

const Gap = styled.div`
  flex: none;
  width: ${({ $w }) => $w}px;
`;

const TitleBar = styled.header`
  display: grid;
  flex: none;
  grid-template-columns: 1fr auto 1fr;
  align-items: center;
  height: 31px;
  background: #444;
`;

const QuickAccess = styled.div`
  display: flex;
  align-items: center;
  padding: 0 0 4px 19px;
`;

const Title = styled.div`
  color: #b4b4b4;
`;

const WindowButtons = styled.div`
  display: flex;
  justify-content: flex-end;
  padding-bottom: 4px;

  button {
    width: 41px;
    height: 20px;
  }
`;

const TabBar = styled.nav`
  display: flex;
  flex: none;
  align-items: stretch;
  height: 22px;
  padding-left: 6px;
  background: #444;
`;

const TabButton = styled.button`
  padding: 0 12px;
  background: ${({ $active }) => ($active ? '#b1b1b1' : 'none')};
  color: ${({ $active }) => ($active ? '#333' : '#f0f0f0')};
`;

const TellMe = styled.button`
  gap: 5px;
  padding-left: 12px;
  color: #b4b4b4;
`;

const ShareButton = styled.button`
  gap: 3px;
  width: 52px;
  margin-right: 14px;
  background: #383838;
  color: #fff;
`;

const RibbonBar = styled.section`
  display: flex;
  flex: none;
  height: 83px;
  background: #b1b1b1;
  color: #262626;
`;

const GroupBox = styled.div`
  display: flex;
  flex: none;
  flex-direction: column;
  width: ${({ $width }) => $width}px;
  padding: 3px 1px 0 0;
  background: linear-gradient(#999, #999) right 3px / 1px 76px no-repeat;
`;

const GroupBody = styled.div`
  display: flex;
  height: 64px;
`;

const GroupFooter = styled.div`
  display: flex;
  align-items: center;
  height: 16px;
  text-align: center;

  span {
    flex: 1;
  }
`;

const LauncherButton = styled.button`
  width: 14px;
`;

const BigButton = styled.button`
  flex: none;
  flex-direction: column;
  justify-content: flex-start;
  width: ${({ $width }) => $width}px;
  padding-top: 3px;
  line-height: 14px;

  > span:first-of-type {
    margin-top: 2px;
  }
`;

const BigSecond = styled.span`
  display: flex;
  align-items: center;
  gap: 2px;
  height: 14px;
`;

const Stack = styled.div`
  display: flex;
  flex-direction: column;

  > button {
    height: 20px;
  }
`;

const SmallButton = styled.button`
  justify-content: flex-start;
  gap: 3px;
  height: 20px;
`;

const TwoRows = styled.div`
  display: flex;
  flex-direction: column;
  gap: 7px;
  padding: 7px 0 0 ${({ $pad }) => $pad}px;
`;

const ToolRow = styled.div`
  display: flex;
  align-items: center;
`;

const Tool = styled.button`
  flex: none;
  width: ${({ $w }) => $w}px;
  height: 20px;
  background: ${({ $on }) => ($on ? '#969696' : 'none')};
  font-family: 'Open Sans', sans-serif;
  font-size: 12px;
`;

const Letter = styled.span`
  font-size: ${({ $size }) => $size}px;
  font-weight: 600;
  line-height: 20px;
`;

const Underlined = styled.u`
  font-weight: 600;
`;

const Corner = styled.span`
  align-self: flex-start;
  padding-top: 3px;
`;

const ColorLetter = styled.span`
  width: 15px;
  border-bottom: 3px solid #e01010;
  font-weight: 700;
  line-height: 12px;
`;

const Comma = styled.b`
  font-size: 18px;
  line-height: 8px;
  padding-bottom: 10px;
`;

const Serif = styled.i`
  font-family: 'Liberation Serif', serif;
  font-size: ${({ $size = 13 }) => $size}px;
  font-weight: ${({ $light }) => ($light ? 400 : 700)};
`;

const Rule = styled.div`
  width: 1px;
  height: 18px;
  margin: 0 ${({ $m }) => $m}px;
  background: #999;
`;

const DarkRule = styled.div`
  width: 1px;
  height: 49px;
  margin: 5px 0 0 3px;
  background: #444;
`;

const ComboBox = styled.div`
  display: grid;
  align-items: center;
  width: ${({ $width }) => $width}px;
  height: 20px;
  border: 1px solid #777;
  background: #d4d4d4;

  select {
    grid-area: 1 / 1;
    width: 100%;
    padding: 0 2px;
    appearance: none;
  }

  svg {
    grid-area: 1 / 1;
    justify-self: end;
    margin-right: 3px;
    pointer-events: none;
  }
`;

const CollapseButton = styled.button`
  align-self: flex-end;
  width: 16px;
  height: 16px;
  margin: 0 4px 0 auto;
`;

const FormulaBar = styled.section`
  display: flex;
  flex: none;
  align-items: center;
  height: 41px;
  padding: 0 3px 0 4px;
  color: #555;
`;

const NameBox = styled.div`
  display: flex;
  align-items: center;
  width: 91px;
  height: 23px;
  padding: 0 5px;
  border: 1px solid #4c4c4c;
  background: #b1b1b1;

  input {
    flex: 1;
  }
`;

const Dots = styled.div`
  width: 2px;
  height: 10px;
  margin: 0 13px;
  background: repeating-linear-gradient(#ddd 0 2px, transparent 2px 4px);
`;

const FormulaTools = styled.div`
  display: flex;
  align-items: center;
  justify-content: space-around;
  width: 98px;
  height: 23px;
  margin-right: 3px;
  border: 1px solid #4c4c4c;
  background: #b1b1b1;
`;

const FormulaInput = styled.div`
  display: flex;
  flex: 1;
  align-items: center;
  height: 23px;
  padding: 0 3px;
  border: 1px solid #4c4c4c;
  background: #b1b1b1;

  input {
    flex: 1;
  }
`;

const SheetArea = styled.section`
  display: flex;
  flex: 1;
  min-height: 0;
`;

const SheetView = styled.div`
  flex: 1;
  overflow: hidden;
`;

const Grid = styled.table`
  width: 100%;
  border-collapse: separate;
  border-spacing: 0;
  table-layout: fixed;
`;

const Col = styled.col`
  width: ${({ $width }) => ($width ? `${$width}px` : 'auto')};
`;

const ColHead = styled.th`
  height: 50px;
  padding: 0;
  border-right: 1px solid #a8a8a8;
  border-bottom: 1px solid #a8a8a8;
  color: #fff;
  font-family: 'Open Sans', sans-serif;
  font-size: 35px;
  font-weight: 400;
  line-height: 49px;

  &:last-child {
    border-right: 0;
  }
`;

const CornerCell = styled(ColHead).attrs({ as: 'td' })`
  svg {
    margin: 1px 3px 0 auto;
  }
`;

const RowHead = styled.th`
  height: 53px;
  padding: 2px 0 0;
  border-right: 1px solid #a8a8a8;
  border-bottom: 1px solid #c8c8c8;
  color: #fff;
  font-family: 'Open Sans', sans-serif;
  font-size: 33px;
  font-weight: 400;
  line-height: 50px;
`;

const Cell = styled.td`
  padding: 0 5px 2px;
  border-right: 1px solid #d4d4d4;
  border-bottom: 1px solid #d4d4d4;
  background: #fff;
  color: #000;
  font-family: Lato, sans-serif;
  font-size: 35px;
  line-height: 50px;
  text-align: ${({ $right }) => ($right ? 'right' : 'left')};
  white-space: nowrap;

  &:last-child {
    border-right: 0;
  }
`;

const ScrollBar = styled.div`
  display: flex;
  flex-direction: column;
  width: 18px;
  padding: 3px 2px 0 3px;
  background: #5c5c5c;
`;

const ScrollButton = styled.button`
  flex: none;
  width: 13px;
  height: 13px;
  border: 1px solid #444;
  background: #a0a0a0;
`;

const ScrollThumb = styled.div`
  width: 13px;
  height: 78px;
  border: 1px solid #555;
  background: #8c8c8c;
`;

const SheetTabs = styled.section`
  display: flex;
  flex: none;
  align-items: center;
  height: 25px;
  padding: 0 2px 0 15px;
`;

const NavButton = styled.button`
  width: 25px;
  height: 20px;
`;

const SheetTab = styled.button`
  align-self: flex-start;
  width: 57px;
  height: 22px;
  margin-left: 25px;
  padding-top: 2px;
  border-bottom: 2px solid #1f7244;
  background: #fff;
  color: #1f7244;
  font-family: 'Open Sans', sans-serif;
  font-size: 11px;
  font-weight: 700;
`;

const AddSheet = styled.button`
  margin-left: 29px;
`;

const HorizontalTrack = styled.div`
  width: 457px;
  height: 13px;
  background: #5c5c5c;
`;

const StatusBar = styled.footer`
  display: flex;
  flex: none;
  align-items: center;
  gap: 12px;
  height: 20px;
  padding: 0 6px;
  border-top: 1px solid #444;
  background: #545454;
  color: #f0f0f0;
  font-size: 10px;
  font-weight: 500;
`;

const Views = styled.div`
  display: flex;
  align-self: stretch;
  margin-left: 5px;
`;

const ViewButton = styled.button`
  width: 34px;
  padding-top: 1px;
  background: ${({ $active }) => ($active ? '#444' : 'none')};
`;

const ZoomControl = styled.div`
  display: flex;
  align-items: center;
  gap: 4px;
  margin-left: -8px;

  input {
    width: 89px;
    height: 12px;
    appearance: none;
    background:
      linear-gradient(#ddd, #ddd) center / 1px 5px no-repeat,
      linear-gradient(#ddd, #ddd) center / 100% 1px no-repeat;
  }

  input::-webkit-slider-thumb {
    width: 4px;
    height: 10px;
    appearance: none;
    background: #fff;
  }
`;

const TaskbarBar = styled.footer`
  display: flex;
  flex: none;
  height: 36px;
  background: #21333f;
  color: #fff;
`;

const StartButton = styled.button`
  width: 43px;
`;

const SearchBox = styled.label`
  display: flex;
  align-items: center;
  gap: 9px;
  width: 308px;
  padding: 0 11px;
  background: #f1f1f1;
  color: #333;
  font-size: 13px;

  input {
    flex: 1;
    padding: 0;
  }

  input::placeholder {
    color: #333;
    opacity: 1;
  }
`;

const AppList = styled.div`
  display: grid;
  grid-template-columns: repeat(13, 1fr);
  width: 570px;
`;

const AppButton = styled.button`
  margin: 0 ${({ $active }) => ($active ? 0 : 4)}px;
  border-top: 2px solid transparent;
  border-bottom: 2px solid ${({ $open }) => ($open ? '#a4cbe0' : 'transparent')};
  background: ${({ $active }) => ($active ? '#50606a' : 'none')};
`;

const Tray = styled.div`
  display: flex;
  align-items: center;
  gap: 8px;
  padding-right: 5px;
`;

const Clock = styled.div`
  display: flex;
  flex-direction: column;
  align-items: center;
  justify-content: center;
  line-height: 16px;
`;

const ActionCenter = styled.button`
  width: 40px;
  padding-left: 8px;
`;

const ShowDesktop = styled.button`
  width: 9px;
  border-left: 1px solid #6b7880;
`;

/* Floats over the sheet */
const RecorderWindow = styled.aside`
  position: absolute;
  right: 41px;
  bottom: 72px;
  width: 449px;
  overflow: hidden;
  border: 1px solid #0c0e12;
  border-radius: 4px;
  background: #15181f;
  color: #c9ced4;
`;

const RecorderMenu = styled.div`
  display: flex;
  align-items: center;
  gap: 12px;
  height: 18px;
  padding: 0 5px 0 6px;
  background: #1e222b;
  color: #aab0b8;
`;

const RecorderBody = styled.div`
  display: flex;
  height: 90px;
  padding: 7px 6px 9px 9px;
`;

const Panel = styled.section`
  display: flex;
  flex: none;
  flex-direction: column;
  width: ${({ $width }) => $width}px;
  border: 1px solid #2c303b;
  border-radius: 3px;
  background: #1f232d;

  & + & {
    margin: 0 2px 0 5px;
  }
`;

const PanelTitle = styled.div`
  height: 17px;
  background: #2c303b;
  line-height: 17px;
  text-align: center;
`;

const Digits = styled.div`
  flex: 1;
  margin: 6px 5px 8px;
  border-radius: 2px;
  background: #2c303c;
  color: #a3aeb9;
  font-family: 'Open Sans', sans-serif;
  font-size: 39px;
  line-height: 41px;
  text-align: center;
`;

const Meter = styled.div`
  display: flex;
  flex: 1;
  align-items: center;
  justify-content: center;
`;

const RecorderButton = styled.button`
  flex-direction: column;
  gap: 4px;
  width: 46px;
  padding-top: 4px;
`;

const Watermark = styled.div`
  position: absolute;
  top: 27px;
  right: 36px;
  display: flex;
  flex-direction: column;
  align-items: center;
  width: 56px;
  height: 50px;
  padding-top: 9px;
  background: rgba(255, 255, 255, 0.65);
  color: #2a86ae;
  font-family: 'Open Sans', sans-serif;
  font-size: 5px;
  font-weight: 800;

  span {
    margin-top: 2px;
    line-height: 7px;
  }
`;
